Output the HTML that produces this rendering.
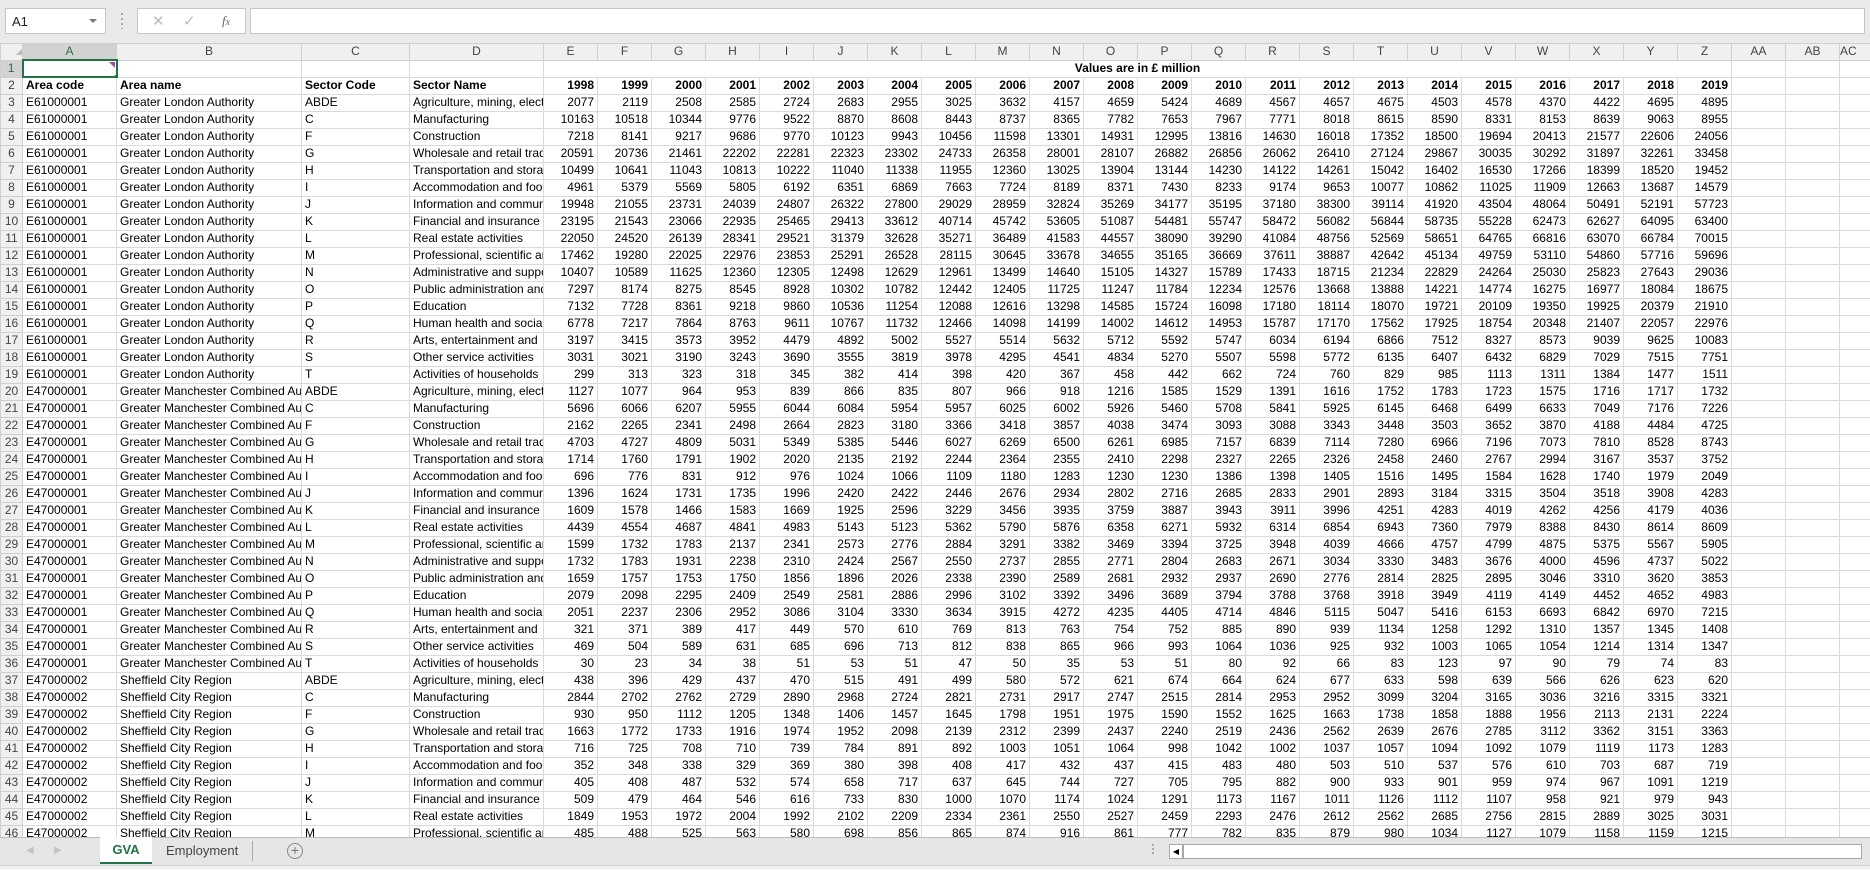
<!DOCTYPE html>
<html><head><meta charset="utf-8">
<style>
*{box-sizing:border-box;margin:0;padding:0}
body{width:1870px;height:870px;overflow:hidden;background:#e9e9e9;font-family:"Liberation Sans",sans-serif;font-size:12px;position:relative}
.top{position:absolute;left:0;top:0;width:1870px;height:43px;background:#eaeaea}
.nb{position:absolute;left:5px;top:8px;width:101px;height:26px;background:#fff;border:1px solid #c6c6c6;font-size:13px;padding:5px 0 0 6px;color:#222}
.nb .dd{position:absolute;right:8px;top:10px;width:0;height:0;border-left:4px solid transparent;border-right:4px solid transparent;border-top:4px solid #777}
.dots{position:absolute;left:121px;top:13px;width:2px;height:16px;background:repeating-linear-gradient(#aaa 0 2px,transparent 2px 5px)}
.btns{position:absolute;left:137px;top:8px;width:109px;height:26px;background:#fff;border:1px solid #c6c6c6;color:#bbb;font-size:15px}
.fx{position:absolute;left:250px;top:8px;width:1615px;height:26px;background:#fff;border:1px solid #c6c6c6}
.grid{position:absolute;left:0;top:43px;width:1870px;height:794px;overflow:hidden;background:#fff}
table{border-collapse:collapse;table-layout:fixed;width:1870px}
td,th{height:17px;border:1px solid #dadada;white-space:nowrap;overflow:hidden;padding:0 3px;font-weight:normal;line-height:15px;text-align:right;color:#000}
th{background:#f0f0f0;color:#444;text-align:center;border-color:#cfcfcf;padding:0}
tr.h th{height:16px;font-size:12px}
td:nth-child(2),td:nth-child(3),td:nth-child(4),td:nth-child(5){text-align:left}
tr.b td{font-weight:bold}
.r1 td{border-right-color:#dadada}
.sel{background:#d2d2d2!important;color:#217346}
.tabs{position:absolute;left:0;top:837px;width:1870px;height:28px;background:#e6e6e6;border-top:1px solid #bdbdbd}
.stat{position:absolute;left:0;top:865px;width:1870px;height:5px;background:#f1f1f1;border-top:1px solid #d0d0d0}
</style></head><body>
<div class="top">
<div class="nb">A1<span class="dd"></span></div>
<div class="dots"></div>
<div class="btns"><span style="position:absolute;left:14px;top:3px">✕</span><span style="position:absolute;left:45px;top:3px">✓</span><span style="position:absolute;left:84px;top:4px;color:#666;font-family:'Liberation Serif',serif;font-style:italic;font-size:13px">f<span style="font-size:10px">x</span></span></div>
<div class="fx"></div>
</div>
<div class="grid">
<table>
<colgroup><col style="width:22px"><col style="width:94px"><col style="width:185px"><col style="width:108px"><col style="width:134px"><col span="24" style="width:54px"><col style="width:31px"></colgroup>
<tr class="h"><th style="font-size:8px;color:#bbb;text-align:right">◢</th><th class="sel" style="border-bottom:2px solid #217346">A</th><th>B</th><th>C</th><th>D</th><th>E</th><th>F</th><th>G</th><th>H</th><th>I</th><th>J</th><th>K</th><th>L</th><th>M</th><th>N</th><th>O</th><th>P</th><th>Q</th><th>R</th><th>S</th><th>T</th><th>U</th><th>V</th><th>W</th><th>X</th><th>Y</th><th>Z</th><th>AA</th><th>AB</th><th style="text-align:left">AC</th></tr>
<tr class="r1"><th class="sel" style="border-right:2px solid #217346">1</th><td style="border:2px solid #217346;position:relative"><span style="position:absolute;right:1px;top:1px;width:0;height:0;border-left:6px solid transparent;border-top:6px solid #a349a4"></span><span style="position:absolute;right:-4px;bottom:-4px;width:6px;height:6px;background:#217346;border:1px solid #fff"></span></td><td></td><td></td><td></td><td colspan="22" style="text-align:center;font-weight:bold">Values are in £ million</td><td></td><td></td><td></td></tr>
<tr class="b"><th>2</th><td>Area code<td>Area name<td>Sector Code<td>Sector Name<td>1998<td>1999<td>2000<td>2001<td>2002<td>2003<td>2004<td>2005<td>2006<td>2007<td>2008<td>2009<td>2010<td>2011<td>2012<td>2013<td>2014<td>2015<td>2016<td>2017<td>2018<td>2019<td><td><td></tr>
<tr><th>3</th><td>E61000001<td>Greater London Authority<td>ABDE<td>Agriculture, mining, electricity<td>2077<td>2119<td>2508<td>2585<td>2724<td>2683<td>2955<td>3025<td>3632<td>4157<td>4659<td>5424<td>4689<td>4567<td>4657<td>4675<td>4503<td>4578<td>4370<td>4422<td>4695<td>4895<td><td><td></tr>
<tr><th>4</th><td>E61000001<td>Greater London Authority<td>C<td>Manufacturing<td>10163<td>10518<td>10344<td>9776<td>9522<td>8870<td>8608<td>8443<td>8737<td>8365<td>7782<td>7653<td>7967<td>7771<td>8018<td>8615<td>8590<td>8331<td>8153<td>8639<td>9063<td>8955<td><td><td></tr>
<tr><th>5</th><td>E61000001<td>Greater London Authority<td>F<td>Construction<td>7218<td>8141<td>9217<td>9686<td>9770<td>10123<td>9943<td>10456<td>11598<td>13301<td>14931<td>12995<td>13816<td>14630<td>16018<td>17352<td>18500<td>19694<td>20413<td>21577<td>22606<td>24056<td><td><td></tr>
<tr><th>6</th><td>E61000001<td>Greater London Authority<td>G<td>Wholesale and retail trade<td>20591<td>20736<td>21461<td>22202<td>22281<td>22323<td>23302<td>24733<td>26358<td>28001<td>28107<td>26882<td>26856<td>26062<td>26410<td>27124<td>29867<td>30035<td>30292<td>31897<td>32261<td>33458<td><td><td></tr>
<tr><th>7</th><td>E61000001<td>Greater London Authority<td>H<td>Transportation and storage<td>10499<td>10641<td>11043<td>10813<td>10222<td>11040<td>11338<td>11955<td>12360<td>13025<td>13904<td>13144<td>14230<td>14122<td>14261<td>15042<td>16402<td>16530<td>17266<td>18399<td>18520<td>19452<td><td><td></tr>
<tr><th>8</th><td>E61000001<td>Greater London Authority<td>I<td>Accommodation and food<td>4961<td>5379<td>5569<td>5805<td>6192<td>6351<td>6869<td>7663<td>7724<td>8189<td>8371<td>7430<td>8233<td>9174<td>9653<td>10077<td>10862<td>11025<td>11909<td>12663<td>13687<td>14579<td><td><td></tr>
<tr><th>9</th><td>E61000001<td>Greater London Authority<td>J<td>Information and communication<td>19948<td>21055<td>23731<td>24039<td>24807<td>26322<td>27800<td>29029<td>28959<td>32824<td>35269<td>34177<td>35195<td>37180<td>38300<td>39114<td>41920<td>43504<td>48064<td>50491<td>52191<td>57723<td><td><td></tr>
<tr><th>10</th><td>E61000001<td>Greater London Authority<td>K<td>Financial and insurance<td>23195<td>21543<td>23066<td>22935<td>25465<td>29413<td>33612<td>40714<td>45742<td>53605<td>51087<td>54481<td>55747<td>58472<td>56082<td>56844<td>58735<td>55228<td>62473<td>62627<td>64095<td>63400<td><td><td></tr>
<tr><th>11</th><td>E61000001<td>Greater London Authority<td>L<td>Real estate activities<td>22050<td>24520<td>26139<td>28341<td>29521<td>31379<td>32628<td>35271<td>36489<td>41583<td>44557<td>38090<td>39290<td>41084<td>48756<td>52569<td>58651<td>64765<td>66816<td>63070<td>66784<td>70015<td><td><td></tr>
<tr><th>12</th><td>E61000001<td>Greater London Authority<td>M<td>Professional, scientific and<td>17462<td>19280<td>22025<td>22976<td>23853<td>25291<td>26528<td>28115<td>30645<td>33678<td>34655<td>35165<td>36669<td>37611<td>38887<td>42642<td>45134<td>49759<td>53110<td>54860<td>57716<td>59696<td><td><td></tr>
<tr><th>13</th><td>E61000001<td>Greater London Authority<td>N<td>Administrative and support<td>10407<td>10589<td>11625<td>12360<td>12305<td>12498<td>12629<td>12961<td>13499<td>14640<td>15105<td>14327<td>15789<td>17433<td>18715<td>21234<td>22829<td>24264<td>25030<td>25823<td>27643<td>29036<td><td><td></tr>
<tr><th>14</th><td>E61000001<td>Greater London Authority<td>O<td>Public administration and<td>7297<td>8174<td>8275<td>8545<td>8928<td>10302<td>10782<td>12442<td>12405<td>11725<td>11247<td>11784<td>12234<td>12576<td>13668<td>13888<td>14221<td>14774<td>16275<td>16977<td>18084<td>18675<td><td><td></tr>
<tr><th>15</th><td>E61000001<td>Greater London Authority<td>P<td>Education<td>7132<td>7728<td>8361<td>9218<td>9860<td>10536<td>11254<td>12088<td>12616<td>13298<td>14585<td>15724<td>16098<td>17180<td>18114<td>18070<td>19721<td>20109<td>19350<td>19925<td>20379<td>21910<td><td><td></tr>
<tr><th>16</th><td>E61000001<td>Greater London Authority<td>Q<td>Human health and social<td>6778<td>7217<td>7864<td>8763<td>9611<td>10767<td>11732<td>12466<td>14098<td>14199<td>14002<td>14612<td>14953<td>15787<td>17170<td>17562<td>17925<td>18754<td>20348<td>21407<td>22057<td>22976<td><td><td></tr>
<tr><th>17</th><td>E61000001<td>Greater London Authority<td>R<td>Arts, entertainment and<td>3197<td>3415<td>3573<td>3952<td>4479<td>4892<td>5002<td>5527<td>5514<td>5632<td>5712<td>5592<td>5747<td>6034<td>6194<td>6866<td>7512<td>8327<td>8573<td>9039<td>9625<td>10083<td><td><td></tr>
<tr><th>18</th><td>E61000001<td>Greater London Authority<td>S<td>Other service activities<td>3031<td>3021<td>3190<td>3243<td>3690<td>3555<td>3819<td>3978<td>4295<td>4541<td>4834<td>5270<td>5507<td>5598<td>5772<td>6135<td>6407<td>6432<td>6829<td>7029<td>7515<td>7751<td><td><td></tr>
<tr><th>19</th><td>E61000001<td>Greater London Authority<td>T<td>Activities of households<td>299<td>313<td>323<td>318<td>345<td>382<td>414<td>398<td>420<td>367<td>458<td>442<td>662<td>724<td>760<td>829<td>985<td>1113<td>1311<td>1384<td>1477<td>1511<td><td><td></tr>
<tr><th>20</th><td>E47000001<td>Greater Manchester Combined Authority<td>ABDE<td>Agriculture, mining, electricity<td>1127<td>1077<td>964<td>953<td>839<td>866<td>835<td>807<td>966<td>918<td>1216<td>1585<td>1529<td>1391<td>1616<td>1752<td>1783<td>1723<td>1575<td>1716<td>1717<td>1732<td><td><td></tr>
<tr><th>21</th><td>E47000001<td>Greater Manchester Combined Authority<td>C<td>Manufacturing<td>5696<td>6066<td>6207<td>5955<td>6044<td>6084<td>5954<td>5957<td>6025<td>6002<td>5926<td>5460<td>5708<td>5841<td>5925<td>6145<td>6468<td>6499<td>6633<td>7049<td>7176<td>7226<td><td><td></tr>
<tr><th>22</th><td>E47000001<td>Greater Manchester Combined Authority<td>F<td>Construction<td>2162<td>2265<td>2341<td>2498<td>2664<td>2823<td>3180<td>3366<td>3418<td>3857<td>4038<td>3474<td>3093<td>3088<td>3343<td>3448<td>3503<td>3652<td>3870<td>4188<td>4484<td>4725<td><td><td></tr>
<tr><th>23</th><td>E47000001<td>Greater Manchester Combined Authority<td>G<td>Wholesale and retail trade<td>4703<td>4727<td>4809<td>5031<td>5349<td>5385<td>5446<td>6027<td>6269<td>6500<td>6261<td>6985<td>7157<td>6839<td>7114<td>7280<td>6966<td>7196<td>7073<td>7810<td>8528<td>8743<td><td><td></tr>
<tr><th>24</th><td>E47000001<td>Greater Manchester Combined Authority<td>H<td>Transportation and storage<td>1714<td>1760<td>1791<td>1902<td>2020<td>2135<td>2192<td>2244<td>2364<td>2355<td>2410<td>2298<td>2327<td>2265<td>2326<td>2458<td>2460<td>2767<td>2994<td>3167<td>3537<td>3752<td><td><td></tr>
<tr><th>25</th><td>E47000001<td>Greater Manchester Combined Authority<td>I<td>Accommodation and food<td>696<td>776<td>831<td>912<td>976<td>1024<td>1066<td>1109<td>1180<td>1283<td>1230<td>1230<td>1386<td>1398<td>1405<td>1516<td>1495<td>1584<td>1628<td>1740<td>1979<td>2049<td><td><td></tr>
<tr><th>26</th><td>E47000001<td>Greater Manchester Combined Authority<td>J<td>Information and communication<td>1396<td>1624<td>1731<td>1735<td>1996<td>2420<td>2422<td>2446<td>2676<td>2934<td>2802<td>2716<td>2685<td>2833<td>2901<td>2893<td>3184<td>3315<td>3504<td>3518<td>3908<td>4283<td><td><td></tr>
<tr><th>27</th><td>E47000001<td>Greater Manchester Combined Authority<td>K<td>Financial and insurance<td>1609<td>1578<td>1466<td>1583<td>1669<td>1925<td>2596<td>3229<td>3456<td>3935<td>3759<td>3887<td>3943<td>3911<td>3996<td>4251<td>4283<td>4019<td>4262<td>4256<td>4179<td>4036<td><td><td></tr>
<tr><th>28</th><td>E47000001<td>Greater Manchester Combined Authority<td>L<td>Real estate activities<td>4439<td>4554<td>4687<td>4841<td>4983<td>5143<td>5123<td>5362<td>5790<td>5876<td>6358<td>6271<td>5932<td>6314<td>6854<td>6943<td>7360<td>7979<td>8388<td>8430<td>8614<td>8609<td><td><td></tr>
<tr><th>29</th><td>E47000001<td>Greater Manchester Combined Authority<td>M<td>Professional, scientific and<td>1599<td>1732<td>1783<td>2137<td>2341<td>2573<td>2776<td>2884<td>3291<td>3382<td>3469<td>3394<td>3725<td>3948<td>4039<td>4666<td>4757<td>4799<td>4875<td>5375<td>5567<td>5905<td><td><td></tr>
<tr><th>30</th><td>E47000001<td>Greater Manchester Combined Authority<td>N<td>Administrative and support<td>1732<td>1783<td>1931<td>2238<td>2310<td>2424<td>2567<td>2550<td>2737<td>2855<td>2771<td>2804<td>2683<td>2671<td>3034<td>3330<td>3483<td>3676<td>4000<td>4596<td>4737<td>5022<td><td><td></tr>
<tr><th>31</th><td>E47000001<td>Greater Manchester Combined Authority<td>O<td>Public administration and<td>1659<td>1757<td>1753<td>1750<td>1856<td>1896<td>2026<td>2338<td>2390<td>2589<td>2681<td>2932<td>2937<td>2690<td>2776<td>2814<td>2825<td>2895<td>3046<td>3310<td>3620<td>3853<td><td><td></tr>
<tr><th>32</th><td>E47000001<td>Greater Manchester Combined Authority<td>P<td>Education<td>2079<td>2098<td>2295<td>2409<td>2549<td>2581<td>2886<td>2996<td>3102<td>3392<td>3496<td>3689<td>3794<td>3788<td>3768<td>3918<td>3949<td>4119<td>4149<td>4452<td>4652<td>4983<td><td><td></tr>
<tr><th>33</th><td>E47000001<td>Greater Manchester Combined Authority<td>Q<td>Human health and social<td>2051<td>2237<td>2306<td>2952<td>3086<td>3104<td>3330<td>3634<td>3915<td>4272<td>4235<td>4405<td>4714<td>4846<td>5115<td>5047<td>5416<td>6153<td>6693<td>6842<td>6970<td>7215<td><td><td></tr>
<tr><th>34</th><td>E47000001<td>Greater Manchester Combined Authority<td>R<td>Arts, entertainment and<td>321<td>371<td>389<td>417<td>449<td>570<td>610<td>769<td>813<td>763<td>754<td>752<td>885<td>890<td>939<td>1134<td>1258<td>1292<td>1310<td>1357<td>1345<td>1408<td><td><td></tr>
<tr><th>35</th><td>E47000001<td>Greater Manchester Combined Authority<td>S<td>Other service activities<td>469<td>504<td>589<td>631<td>685<td>696<td>713<td>812<td>838<td>865<td>966<td>993<td>1064<td>1036<td>925<td>932<td>1003<td>1065<td>1054<td>1214<td>1314<td>1347<td><td><td></tr>
<tr><th>36</th><td>E47000001<td>Greater Manchester Combined Authority<td>T<td>Activities of households<td>30<td>23<td>34<td>38<td>51<td>53<td>51<td>47<td>50<td>35<td>53<td>51<td>80<td>92<td>66<td>83<td>123<td>97<td>90<td>79<td>74<td>83<td><td><td></tr>
<tr><th>37</th><td>E47000002<td>Sheffield City Region<td>ABDE<td>Agriculture, mining, electricity<td>438<td>396<td>429<td>437<td>470<td>515<td>491<td>499<td>580<td>572<td>621<td>674<td>664<td>624<td>677<td>633<td>598<td>639<td>566<td>626<td>623<td>620<td><td><td></tr>
<tr><th>38</th><td>E47000002<td>Sheffield City Region<td>C<td>Manufacturing<td>2844<td>2702<td>2762<td>2729<td>2890<td>2968<td>2724<td>2821<td>2731<td>2917<td>2747<td>2515<td>2814<td>2953<td>2952<td>3099<td>3204<td>3165<td>3036<td>3216<td>3315<td>3321<td><td><td></tr>
<tr><th>39</th><td>E47000002<td>Sheffield City Region<td>F<td>Construction<td>930<td>950<td>1112<td>1205<td>1348<td>1406<td>1457<td>1645<td>1798<td>1951<td>1975<td>1590<td>1552<td>1625<td>1663<td>1738<td>1858<td>1888<td>1956<td>2113<td>2131<td>2224<td><td><td></tr>
<tr><th>40</th><td>E47000002<td>Sheffield City Region<td>G<td>Wholesale and retail trade<td>1663<td>1772<td>1733<td>1916<td>1974<td>1952<td>2098<td>2139<td>2312<td>2399<td>2437<td>2240<td>2519<td>2436<td>2562<td>2639<td>2676<td>2785<td>3112<td>3362<td>3151<td>3363<td><td><td></tr>
<tr><th>41</th><td>E47000002<td>Sheffield City Region<td>H<td>Transportation and storage<td>716<td>725<td>708<td>710<td>739<td>784<td>891<td>892<td>1003<td>1051<td>1064<td>998<td>1042<td>1002<td>1037<td>1057<td>1094<td>1092<td>1079<td>1119<td>1173<td>1283<td><td><td></tr>
<tr><th>42</th><td>E47000002<td>Sheffield City Region<td>I<td>Accommodation and food<td>352<td>348<td>338<td>329<td>369<td>380<td>398<td>408<td>417<td>432<td>437<td>415<td>483<td>480<td>503<td>510<td>537<td>576<td>610<td>703<td>687<td>719<td><td><td></tr>
<tr><th>43</th><td>E47000002<td>Sheffield City Region<td>J<td>Information and communication<td>405<td>408<td>487<td>532<td>574<td>658<td>717<td>637<td>645<td>744<td>727<td>705<td>795<td>882<td>900<td>933<td>901<td>959<td>974<td>967<td>1091<td>1219<td><td><td></tr>
<tr><th>44</th><td>E47000002<td>Sheffield City Region<td>K<td>Financial and insurance<td>509<td>479<td>464<td>546<td>616<td>733<td>830<td>1000<td>1070<td>1174<td>1024<td>1291<td>1173<td>1167<td>1011<td>1126<td>1112<td>1107<td>958<td>921<td>979<td>943<td><td><td></tr>
<tr><th>45</th><td>E47000002<td>Sheffield City Region<td>L<td>Real estate activities<td>1849<td>1953<td>1972<td>2004<td>1992<td>2102<td>2209<td>2334<td>2361<td>2550<td>2527<td>2459<td>2293<td>2476<td>2612<td>2562<td>2685<td>2756<td>2815<td>2889<td>3025<td>3031<td><td><td></tr>
<tr><th>46</th><td>E47000002<td>Sheffield City Region<td>M<td>Professional, scientific and<td>485<td>488<td>525<td>563<td>580<td>698<td>856<td>865<td>874<td>916<td>861<td>777<td>782<td>835<td>879<td>980<td>1034<td>1127<td>1079<td>1158<td>1159<td>1215<td><td><td></tr>
</table>
</div>
<div class="tabs">
<span style="position:absolute;left:26px;top:7px;color:#c4c4c4;font-size:10px">◀</span>
<span style="position:absolute;left:54px;top:7px;color:#c4c4c4;font-size:10px">▶</span>
<div style="position:absolute;left:100px;top:-1px;width:52px;height:27px;background:#fff;border-bottom:2px solid #217346;color:#217346;font-weight:bold;font-size:13px;text-align:center;line-height:25px">GVA</div>
<div style="position:absolute;left:166px;top:5px;font-size:13px;color:#444">Employment</div>
<div style="position:absolute;left:252px;top:3px;width:1px;height:20px;background:#aaa"></div>
<div style="position:absolute;left:287px;top:5px;width:16px;height:16px;border:1px solid #888;border-radius:50%;color:#777;font-size:14px;line-height:13px;text-align:center">+</div>
<div style="position:absolute;left:1152px;top:6px;width:2px;height:12px;background:repeating-linear-gradient(#aaa 0 2px,transparent 2px 4px)"></div>
<div style="position:absolute;left:1169px;top:6px;width:693px;height:15px;background:#fff;border:1px solid #a8a8a8">
<div style="position:absolute;left:0;top:0;width:14px;height:13px;border-right:2px solid #a8a8a8;font-size:8px;line-height:13px;text-align:center">◀</div></div>
</div>
<div class="stat"></div>
</body></html>
